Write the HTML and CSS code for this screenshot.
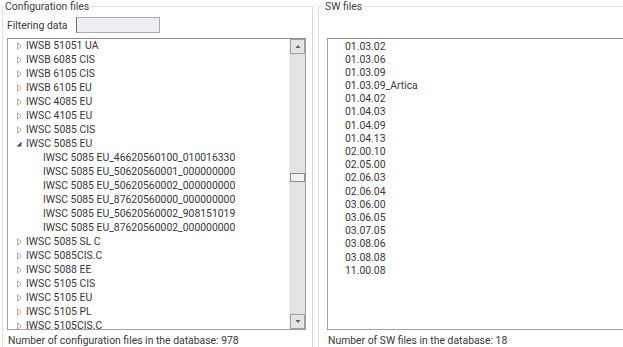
FILE: index.html
```html
<!DOCTYPE html>
<html>
<head>
<meta charset="utf-8">
<link rel="stylesheet" href="styles.css">
</head>
<body>
<div class="page">
  <fieldset class="group group-left">
    <legend>Configuration files</legend>
    <div class="filter-row">
      <span class="label">Filtering data</span>
      <span class="textbox"></span>
    </div>
    <div class="listbox tree">
      <div class="items">
        <div class="row"><svg class="tri" viewBox="0 0 5 8"><path d="M0.5 0.8 L4.2 4 L0.5 7.2 Z" fill="none" stroke="#a6a6a6" stroke-width="0.9"/></svg>IWSB 51051 UA</div>
        <div class="row"><svg class="tri" viewBox="0 0 5 8"><path d="M0.5 0.8 L4.2 4 L0.5 7.2 Z" fill="none" stroke="#a6a6a6" stroke-width="0.9"/></svg>IWSB 6085 CIS</div>
        <div class="row"><svg class="tri" viewBox="0 0 5 8"><path d="M0.5 0.8 L4.2 4 L0.5 7.2 Z" fill="none" stroke="#a6a6a6" stroke-width="0.9"/></svg>IWSB 6105 CIS</div>
        <div class="row"><svg class="tri" viewBox="0 0 5 8"><path d="M0.5 0.8 L4.2 4 L0.5 7.2 Z" fill="none" stroke="#a6a6a6" stroke-width="0.9"/></svg>IWSB 6105 EU</div>
        <div class="row"><svg class="tri" viewBox="0 0 5 8"><path d="M0.5 0.8 L4.2 4 L0.5 7.2 Z" fill="none" stroke="#a6a6a6" stroke-width="0.9"/></svg>IWSC 4085 EU</div>
        <div class="row"><svg class="tri" viewBox="0 0 5 8"><path d="M0.5 0.8 L4.2 4 L0.5 7.2 Z" fill="none" stroke="#a6a6a6" stroke-width="0.9"/></svg>IWSC 4105 EU</div>
        <div class="row"><svg class="tri" viewBox="0 0 5 8"><path d="M0.5 0.8 L4.2 4 L0.5 7.2 Z" fill="none" stroke="#a6a6a6" stroke-width="0.9"/></svg>IWSC 5085 CIS</div>
        <div class="row"><svg class="tri" viewBox="0 0 5 8"><path d="M4.5 1.5 L4.5 6.5 L-0.5 6.5 Z" fill="#505050"/></svg>IWSC 5085 EU</div>
        <div class="row child">IWSC 5085 EU_46620560100_010016330</div>
        <div class="row child">IWSC 5085 EU_50620560001_000000000</div>
        <div class="row child">IWSC 5085 EU_50620560002_000000000</div>
        <div class="row child">IWSC 5085 EU_87620560000_000000000</div>
        <div class="row child">IWSC 5085 EU_50620560002_908151019</div>
        <div class="row child">IWSC 5085 EU_87620560002_000000000</div>
        <div class="row"><svg class="tri" viewBox="0 0 5 8"><path d="M0.5 0.8 L4.2 4 L0.5 7.2 Z" fill="none" stroke="#a6a6a6" stroke-width="0.9"/></svg>IWSC 5085 SL C</div>
        <div class="row"><svg class="tri" viewBox="0 0 5 8"><path d="M0.5 0.8 L4.2 4 L0.5 7.2 Z" fill="none" stroke="#a6a6a6" stroke-width="0.9"/></svg>IWSC 5085CIS.C</div>
        <div class="row"><svg class="tri" viewBox="0 0 5 8"><path d="M0.5 0.8 L4.2 4 L0.5 7.2 Z" fill="none" stroke="#a6a6a6" stroke-width="0.9"/></svg>IWSC 5088 EE</div>
        <div class="row"><svg class="tri" viewBox="0 0 5 8"><path d="M0.5 0.8 L4.2 4 L0.5 7.2 Z" fill="none" stroke="#a6a6a6" stroke-width="0.9"/></svg>IWSC 5105 CIS</div>
        <div class="row"><svg class="tri" viewBox="0 0 5 8"><path d="M0.5 0.8 L4.2 4 L0.5 7.2 Z" fill="none" stroke="#a6a6a6" stroke-width="0.9"/></svg>IWSC 5105 EU</div>
        <div class="row"><svg class="tri" viewBox="0 0 5 8"><path d="M0.5 0.8 L4.2 4 L0.5 7.2 Z" fill="none" stroke="#a6a6a6" stroke-width="0.9"/></svg>IWSC 5105 PL</div>
        <div class="row"><svg class="tri" viewBox="0 0 5 8"><path d="M0.5 0.8 L4.2 4 L0.5 7.2 Z" fill="none" stroke="#a6a6a6" stroke-width="0.9"/></svg>IWSC 5105CIS.C</div>
      </div>
      <div class="scrollbar">
        <div class="sb-btn"><svg viewBox="0 0 7 4" class="arrow"><path d="M0 4 L3.5 0 L7 4 Z" fill="#606060"/></svg></div>
        <div class="sb-track"><div class="sb-thumb"></div></div>
        <div class="sb-btn"><svg viewBox="0 0 7 4" class="arrow"><path d="M0 0 L3.5 4 L7 0 Z" fill="#606060"/></svg></div>
      </div>
    </div>
    <div class="status">Number of configuration files in the database: 978</div>
  </fieldset>
  <fieldset class="group group-right">
    <legend>SW files</legend>
    <div class="listbox sw">
      <div class="items">
        <div class="row">01.03.02</div>
        <div class="row">01.03.06</div>
        <div class="row">01.03.09</div>
        <div class="row">01.03.09_Artica</div>
        <div class="row">01.04.02</div>
        <div class="row">01.04.03</div>
        <div class="row">01.04.09</div>
        <div class="row">01.04.13</div>
        <div class="row">02.00.10</div>
        <div class="row">02.05.00</div>
        <div class="row">02.06.03</div>
        <div class="row">02.06.04</div>
        <div class="row">03.06.00</div>
        <div class="row">03.06.05</div>
        <div class="row">03.07.05</div>
        <div class="row">03.08.06</div>
        <div class="row">03.08.08</div>
        <div class="row">11.00.08</div>
      </div>
    </div>
    <div class="status">Number of SW files in the database: 18</div>
  </fieldset>
</div>
</body>
</html>
```

FILE: styles.css
```css
html, body {
  margin: 0;
  padding: 0;
  background: #ffffff;
  overflow: hidden;
}
body {
  width: 623px;
  height: 347px;
  font-family: Roboto, "Open Sans", sans-serif;
  font-size: 10.4px;
  color: #383838;
}
.page {
  display: flex;
  gap: 5px;
  padding-left: 2px;
}
.group {
  margin: 0;
  padding: 4px 6px 0 4px;
  border: 1px solid #dedede;
  border-bottom: none;
  height: 360px;
  box-sizing: border-box;
  min-width: 0;
  min-inline-size: 0;
}
.group legend {
  padding: 0 2px;
  margin-left: -4px;
  line-height: 13px;
  color: #404040;
}
.group-left {
  width: 311px;
  flex: none;
}
.group-right {
  flex: 1;
  padding-left: 8px;
  padding-right: 0;
  margin-right: -20px;
}
.filter-row {
  display: grid;
  grid-template-columns: 69px 84px;
  align-items: center;
  height: 16px;
}
.textbox {
  height: 16px;
  box-sizing: border-box;
  background: #edeff2;
  border: 1px solid #a9abb0;
  border-left-color: #707070;
}
.listbox {
  display: flex;
  border: 1px solid #a3a3a3;
  border-top-color: #8c8c8c;
  height: 292px;
  box-sizing: border-box;
  background: #fff;
}
.tree {
  margin-top: 5px;
}
.sw {
  margin-top: 21px;
}
.items {
  flex: 1;
  padding-top: 0;
}
.row {
  display: flex;
  align-items: center;
  white-space: nowrap;
}
.tree .row {
  height: 14px;
  line-height: 14px;
  padding-left: 9px;
}
.tri {
  width: 5px;
  height: 8px;
  margin-right: 4px;
  flex: none;
}
.tree .row.child {
  padding-left: 35px;
}
.sw .items {
  padding-top: 0.5px;
}
.sw .row {
  height: 13.2px;
  line-height: 13.2px;
  padding-left: 17px;
}
.scrollbar {
  width: 16px;
  flex: none;
  display: flex;
  flex-direction: column;
  background: #e3e3e3;
  border-left: 1px solid #ececec;
  box-sizing: border-box;
}
.sb-btn {
  height: 15px;
  border: 1px solid #a0a0a0;
  background: #e4e4e4;
  display: flex;
  align-items: center;
  justify-content: center;
  box-sizing: border-box;
}
.arrow {
  width: 6px;
  height: 3px;
}
.sb-track {
  flex: 1;
}
.sb-thumb {
  margin-top: 119px;
  height: 9px;
  border: 1px solid #8a8a8a;
  background: #f2f2f2;
  box-sizing: border-box;
}
.status {
  margin-top: 4px;
  line-height: 13px;
  padding-left: 1px;
  white-space: nowrap;
}
```
